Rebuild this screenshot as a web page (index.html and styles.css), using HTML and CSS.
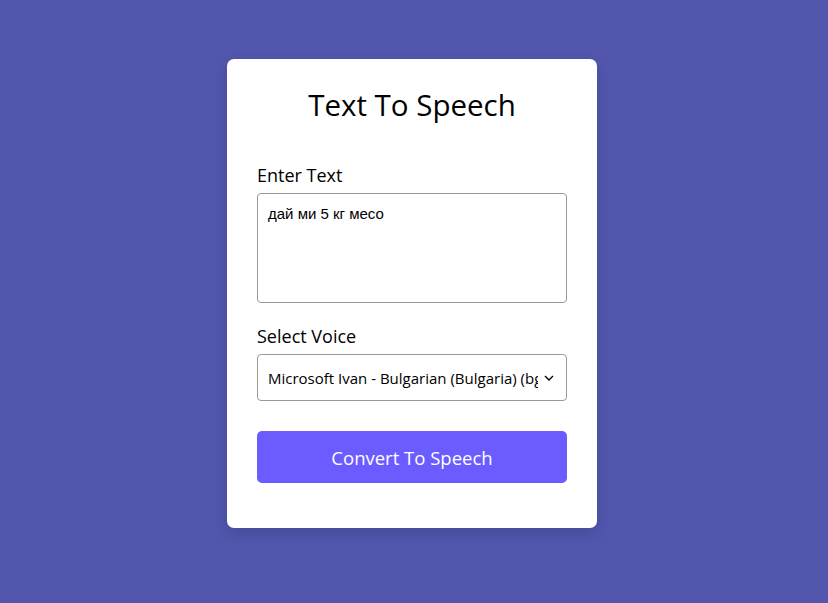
FILE: index.html
```html
<!DOCTYPE html>
<html lang="en">
<head>
<meta charset="utf-8">
<title>Text To Speech</title>
<link rel="stylesheet" href="styles.css">
</head>
<body>
<div class="page">
  <div class="card">
    <h1 class="title">Text To Speech</h1>
    <label class="label" for="text">Enter Text</label>
    <textarea id="text" class="textarea">дай ми 5 кг месо</textarea>
    <label class="label label-voice" for="voice">Select Voice</label>
    <div class="select">
      <span class="select-text">Microsoft Ivan - Bulgarian (Bulgaria) (bg-BG)</span>
      <svg class="chev" width="10" height="6" viewBox="0 0 10 6"><path d="M1 1 L5 5 L9 1" fill="none" stroke="#000" stroke-width="1.4"/></svg>
    </div>
    <button class="button">Convert To Speech</button>
  </div>
</div>
</body>
</html>
```
FILE: styles.css
```css
html, body { margin: 0; padding: 0; }
body {
  background: #5257ad;
  font-family: "Open Sans", "DejaVu Sans", sans-serif;
  height: 603px;
  overflow: hidden;
}
.page {
  display: flex;
  justify-content: center;
  padding: 59px 4px 0 0;
}
.card {
  width: 370px;
  height: 469px;
  box-sizing: border-box;
  background: #fff;
  border-radius: 7px;
  padding: 27px 30px 0;
  display: flex;
  flex-direction: column;
  box-shadow: 0 6px 14px rgba(40, 40, 90, 0.25);
}
.title {
  margin: 0;
  text-align: center;
  font-weight: 500;
  font-size: 29.5px;
  line-height: 38px;
  color: #000;
}
.label {
  font-size: 18px;
  line-height: 24px;
  color: #000;
  margin-top: 39px;
  margin-bottom: 6px;
}
.label-voice { margin-top: 21px; margin-bottom: 6px; }
.textarea {
  box-sizing: border-box;
  width: 310px;
  height: 110px;
  border: 1px solid #999;
  border-radius: 4px;
  padding: 10px 10px;
  font-family: "Liberation Sans", Arial, sans-serif;
  font-size: 15px;
  line-height: 19px;
  resize: none;
  color: #000;
  margin: 0;
}
.select {
  box-sizing: border-box;
  width: 310px;
  height: 47px;
  border: 1px solid #999;
  border-radius: 4px;
  display: flex;
  align-items: center;
  padding: 0 12px 0 10px;
  gap: 6px;
}
.select-text {
  flex: 1;
  overflow: hidden;
  white-space: nowrap;
  font-size: 15px;
  color: #000;
}
.chev { flex: none; }
.button {
  margin-top: 30px;
  width: 310px;
  height: 52px;
  border: none;
  border-radius: 5px;
  background: #6a5cff;
  color: #fff;
  font-family: inherit;
  font-size: 18.5px;
  padding: 0;
}
```
